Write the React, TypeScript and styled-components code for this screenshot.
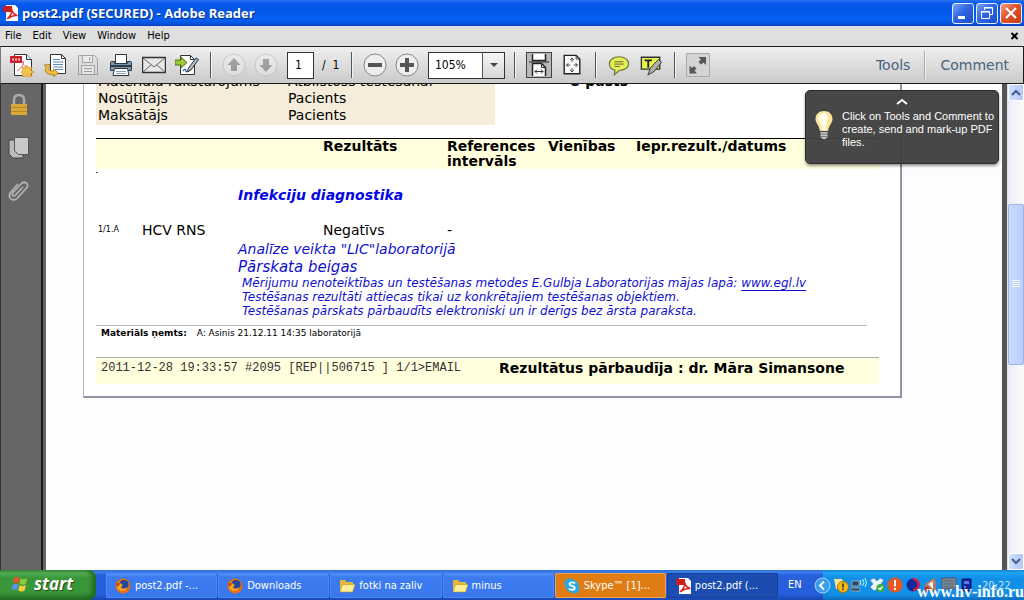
import React from "react";
import styled, { createGlobalStyle } from "styled-components";

const ui = `"DejaVu Sans Condensed", "Noto Sans", sans-serif`;
const doc = `"DejaVu Sans", Verdana, sans-serif`;

const Global = createGlobalStyle`
  * { box-sizing: border-box; }
  body { margin: 0; background: #fff; font-family: ${ui}; font-size: 11px; color: #000; }
  button, input { font: inherit; color: inherit; }
  button { border: 0; padding: 0; background: none; }
`;

const Window = styled.div`
  display: flex;
  flex-direction: column;
  height: 100vh;
  min-height: 420px;
  overflow: hidden;
`;

/* ---------- title and menu ---------- */
const TitleBar = styled.header`
  display: flex;
  align-items: center;
  gap: 4px;
  height: 26px;
  flex: none;
  padding: 0 2px 0 3px;
  background: linear-gradient(#2a72e8 0, #0a5bf0 3px, #0355e4 8px, #0560f4 20px, #0550d8 24px, #0340b8 26px);
  svg { flex: none; }
`;
const Title = styled.h1`
  flex: 1;
  margin: 0;
  font: bold 13px/26px "Open Sans", sans-serif;
  color: #fff;
  text-shadow: 1px 1px 1px #0a2f88;
  white-space: nowrap;
`;
const WindowButtons = styled.div`
  display: flex;
  gap: 2px;
`;
const WindowButton = styled.button<{ $close?: boolean }>`
  display: grid;
  place-items: center;
  width: 22px;
  height: 21px;
  border: 1px solid #e6eefc;
  border-radius: 3px;
  background: ${(p) => (p.$close
    ? "linear-gradient(135deg, #f0a080, #e0532a 45%, #c43c10)"
    : "linear-gradient(135deg, #7ba4f4, #2f66e2 45%, #1c4cc8)")};
`;
const MenuBar = styled.nav`
  display: flex;
  align-items: center;
  gap: 11px;
  height: 20px;
  flex: none;
  padding: 0 5px;
  background: #dfdfdf;
`;
const MenuItem = styled.button`
  line-height: 18px;
`;
const CloseDoc = styled.button`
  margin-left: auto;
  display: flex;
`;

/* ---------- toolbar ---------- */
const Toolbar = styled.div`
  display: flex;
  align-items: center;
  height: 38px;
  flex: none;
  padding: 0 7px 0 4px;
  border: 1px solid #1c1c1c;
  border-left-color: #777;
  background: linear-gradient(#efefef, #d9d9d9 60%, #cacaca);
`;
const Tool = styled.button<{ $w?: number; $dim?: boolean }>`
  display: grid;
  place-items: center;
  flex: none;
  width: ${(p) => p.$w ?? 33}px;
  height: 28px;
  opacity: ${(p) => (p.$dim ? 0.45 : 1)};
`;
const Pressed = styled.span`
  display: grid;
  place-items: center;
  width: 26px;
  height: 26px;
  border: 1px solid #444;
  background: #b9b9b9;
`;
const Separator = styled.span`
  flex: none;
  width: 1px;
  height: 26px;
  margin: 0 7px;
  background: #555;
  box-shadow: 1px 0 #f4f4f4;
`;
const PageInput = styled.input`
  width: 27px;
  height: 27px;
  margin: 0 8px 0 5px;
  padding: 0 0 0 7px;
  border: 1px solid #333;
  background: #fff;
  font-size: 12px;
`;
const PageCount = styled.span`
  width: 22px;
  font-size: 12px;
  white-space: pre;
`;
const Combo = styled.div`
  display: flex;
  flex: none;
  width: 77px;
  height: 27px;
  margin: 0 2px 0 5px;
  border: 1px solid #333;
  background: #fff;
`;
const ComboInput = styled.input`
  flex: 1;
  min-width: 0;
  border: 0;
  padding: 0 6px;
  background: none;
  font-size: 12px;
`;
const ComboArrow = styled.button`
  display: grid;
  place-items: center;
  width: 22px;
  border-left: 1px solid #555;
  background: linear-gradient(#f6f6f6, #d8d8d8);
`;
const PaneTabs = styled.div`
  display: flex;
  align-items: center;
  margin-left: auto;
`;
const PaneTab = styled.button`
  padding: 0 7px;
  font: 14px/26px ${doc};
  color: #48637e;
`;
const PaneDivider = styled.span`
  width: 2px;
  height: 28px;
  margin: 0 7px;
  border-left: 1px solid #aaa;
  border-right: 1px solid #f2f2f2;
`;

/* ---------- workspace ---------- */
const Workspace = styled.div`
  display: flex;
  flex: 1;
  min-height: 0;
`;
const SideBar = styled.aside`
  display: flex;
  flex-direction: column;
  align-items: center;
  gap: 18px;
  flex: none;
  width: 46px;
  padding: 8px 9px 0 0;
  border-left: 1px solid #333;
  background: linear-gradient(90deg, #666 40px, #1a1a1a 40px, #1a1a1a 42px, #666 42px);
`;
const SideButton = styled.button`
  display: grid;
  place-items: center;
  width: 26px;
  height: 25px;
`;
const Viewport = styled.main`
  position: relative;
  flex: 1;
  min-width: 0;
  overflow: hidden;
  background: #fdfdfd;
`;
const Sheet = styled.article`
  margin: -11px 100px 0 37px;
  padding: 0 21px 12px 12px;
  border: 1px solid #8f93a6;
  border-left-color: #bbb;
  border-width: 0 2px 2px 1px;
  background: #fff;
  font-family: ${doc};
  font-size: 14px;
`;
const Details = styled.dl`
  display: grid;
  grid-template-columns: 190px 282px 1fr;
  margin: 0;
  line-height: 17px;
  white-space: nowrap;
  padding: 0 0 1px 2px;
  background: linear-gradient(#f5ecda, #f5ecda) 0 0 / 399px 100% no-repeat;
  dt, dd { margin: 0; }
`;
const Mail = styled.dt`
  font-weight: bold;
`;
const Results = styled.table`
  width: 100%;
  margin-top: 13px;
  table-layout: fixed;
  border-collapse: collapse;
  td, th { padding: 0; text-align: left; vertical-align: top; white-space: nowrap; }
  thead { background: #ffffde; border-top: 1px solid #000; }
  th { line-height: 15px; height: 30px; }
  td { height: 18px; line-height: 18px; }
`;
const Mark = styled.span`
  display: block;
  width: 2px;
  height: 1px;
  margin: 3px 0 0 0;
  background: #555;
`;
const Group = styled.td`
  && {
    height: 52px;
    padding-left: 96px;
    line-height: 52px;
    font-weight: bold;
    font-style: italic;
    color: #0404e4;
  }
`;
const Code = styled.td`
  && {
    padding-left: 2px;
    font-size: 8px;
  }
`;
const Notes = styled.section`
  padding: 1px 0 7px 142px;
  color: #1010cc;
  font-style: italic;
  white-space: nowrap;
  p { margin: 0; line-height: 18px; }
`;
const Closing = styled.p`
  font-size: 15px;
`;
const Fine = styled.ul`
  margin: 0;
  padding: 0 0 0 4px;
  list-style: none;
  font-size: 12px;
  line-height: 14px;
  a { color: inherit; text-underline-offset: 3px; }
`;
const Material = styled.p`
  margin: 0 12px 0 0;
  padding: 0 0 0 5px;
  height: 32px;
  border-top: 1px solid #bbb;
  font-size: 9px;
  line-height: 14px;
  b { margin-right: 7px; }
`;
const SignOff = styled.footer`
  display: grid;
  grid-template-columns: 398px 1fr;
  height: 27px;
  padding-left: 5px;
  border-top: 1px solid #aaa;
  background: #ffffde;
  line-height: 20px;
  white-space: nowrap;
  code { font: 12px/20px "Liberation Mono", monospace; color: #333; }
`;
const Hint = styled.div`
  position: absolute;
  top: 6px;
  right: 3px;
  width: 194px;
  display: grid;
  grid-template-columns: 36px 1fr;
  justify-items: center;
  padding: 7px 0 14px 0;
  border: 1px solid #2c2c2c;
  border-radius: 5px;
  background: rgba(64, 64, 64, 0.96);
  box-shadow: 0 2px 3px rgba(0, 0, 0, 0.4);
  color: #fff;
  font-family: "Liberation Sans", Arial, sans-serif;
  line-height: 13px;
  white-space: nowrap;
  p { margin: 0; justify-self: start; }
`;
const HintCaret = styled.button`
  display: flex;
  grid-column: 1 / -1;
  height: 12px;
`;

const Rail = styled.div`
  display: flex;
  flex-direction: column;
  flex: none;
  width: 22px;
  padding-left: 6px;
  background: linear-gradient(90deg, #555 5px, #ddd 5px, #eef0f8 7px, #fafafa 20px);
`;
const RailButton = styled.button`
  display: grid;
  place-items: center;
  height: 17px;
  flex: none;
  border: 1px solid #fff;
  border-radius: 2px;
  background: linear-gradient(90deg, #d2defc, #b4c8f6);
`;
const RailGap = styled.span<{ $grow: number }>`
  flex: ${(p) => p.$grow} 0 0;
`;
const Thumb = styled.span`
  display: grid;
  place-items: center;
  flex: 160 0 0;
  border: 1px solid #9cb4ec;
  border-radius: 2px;
  background: linear-gradient(90deg, #cbd9fd, #bccefa);
`;

/* ---------- taskbar ---------- */
const Taskbar = styled.footer`
  position: relative;
  display: flex;
  height: 30px;
  flex: none;
  background: linear-gradient(#3168c8 0, #3c82f0 2px, #2860dc 5px, #245edb 24px, #1a48b4 30px);
  color: #fff;
`;
const Start = styled.button`
  display: flex;
  align-items: center;
  gap: 6px;
  flex: none;
  width: 96px;
  margin-right: 10px;
  padding: 0 0 2px 11px;
  border-radius: 0 8px 8px 0;
  background: linear-gradient(#4a9a4a 0, #58b058 3px, #3a963a 8px, #3a963a 22px, #256c25 30px);
  box-shadow: inset -4px 0 5px #1f6a1f;
  font: italic bold 17px/28px "Open Sans", sans-serif;
  text-shadow: 1px 1px 1px #234d12;
`;
const Tasks = styled.div`
  display: flex;
  flex: 0 1 672px;
  gap: 1px;
  padding: 3px 0 2px;
`;
const Task = styled.button<{ $tone?: "alert" | "active" }>`
  display: flex;
  align-items: center;
  gap: 4px;
  flex: 1 1 0;
  min-width: 0;
  padding-left: 9px;
  border-radius: 2px;
  white-space: nowrap;
  background: ${(p) =>
    p.$tone === "alert" ? "#e07c14" : p.$tone === "active" ? "#1c4cb0" : "linear-gradient(#5a98fa, #3c7cf0 4px, #3876ec)"};
  box-shadow: inset 0 0 0 1px ${(p) => (p.$tone === "alert" ? "#f0a050" : p.$tone === "active" ? "#183f98" : "#4c88f4")};
`;
const Language = styled.span`
  margin: 0 auto 0 10px;
  line-height: 30px;
`;
const Tray = styled.div`
  display: flex;
  align-items: center;
  gap: 2px;
  flex: none;
  width: 201px;
  background: linear-gradient(#1288d4 0, #1fa4f4 3px, #1290e8 8px, #1290e8 24px, #0c6cc0 30px);
  svg { flex: none; }
`;
const Expand = styled.button`
  display: flex;
  margin-left: -9px;
`;
const Clock = styled.time`
  margin-left: 5px;
  color: #c4e2fa;
`;
const Watermark = styled.span`
  position: absolute;
  right: 0;
  bottom: 0;
  font: bold 16px/16px "Liberation Serif", serif;
`;

const PdfIcon = () => (
  <svg width="15" height="16" viewBox="0 0 15 16">
    <path d="M3 0h9l3 3v13H3z" fill="#fff" />
    <path d="M0 1h9v6H0z" fill="#c81e1e" />
    <path d="M4 14c3-2 5-6 4.500-10c1 5 3 6 6 6.500c-4-.500-7 1-10.500 3.500" fill="none" stroke="#d22" strokeWidth="1.500" />
  </svg>
);
const Svg = ({ s = 24, children }: { s?: number; children: React.ReactNode }) => (
  <svg width={s} height={s} viewBox="0 0 24 24" fill="none">{children}</svg>
);
const CreatePdf = () => (
  <Svg>
    <path d="M4.500 1.500h12l5 5v16h-17z" fill="#fff" stroke="#333" />
    <path d="M16.500 1.500v5h5" fill="#def" stroke="#333" />
    <path d="M7 18c5-3 7-7 6-10c0 5 3 7 7 7" stroke="#d66" />
    <path d="M0 3h12v7H0z" fill="#c9202c" />
    <path d="M2 6.500h8" stroke="#f7bcbc" strokeWidth="2" strokeDasharray="2 1" />
    <path d="M17 12l1.700 3 3.300-.700-1 3.200 3 1.500-3 1.700 1 3-3.300-.700-1.700 1-1.700-1-3.300.700 1-3-2-1.700 2-1.500-1-3.200 3.300.700z" fill="#f3c04a" stroke="#c88820" strokeWidth=".6" />
  </Svg>
);
const OpenDoc = () => (
  <Svg>
    <path d="M7.500 1.500h11l4 4v15h-15z" fill="#fff" stroke="#333" />
    <path d="M18.500 1.500v4h4" stroke="#333" />
    <path d="M10 6.500h7M10 9h10M10 11.500h10M10 14h10M12 16.500h8" stroke="#5b87b5" />
    <path d="M1 12l6-.500-.500 2.500c-2 2 0 4.500 4 4V16l5 4-5 3.500v-2C3 22 .500 17.500 3.500 14z" fill="#f2bf3c" stroke="#a87414" strokeWidth=".8" />
  </Svg>
);
const Save = () => (
  <Svg>
    <path d="M2.500 2.500h16l3 3v16h-19z" fill="#ddd" stroke="#555" />
    <path d="M6.500 2.500h10v7h-10zM5.500 12.500h13v9h-13z" fill="#f4f4f4" stroke="#555" />
    <path d="M13.500 4v4M8 15.500h8M8 18.500h8" stroke="#555" />
  </Svg>
);
const Print = () => (
  <Svg>
    <path d="M6.500 1.500h11v9h-11z" fill="#fff" stroke="#333" />
    <path d="M1.500 9.500q0-1 1-1h3v2h13v-2h3q1 0 1 1v8h-21z" fill="#7c98ae" stroke="#2d3b48" />
    <path d="M2 13h20" stroke="#2d3b48" strokeWidth="2" />
    <path d="M5.500 15.500h13l1.500 7H4z" fill="#fff" stroke="#333" />
    <path d="M7 18.500h10M7 20.500h10" stroke="#7fa8c8" />
  </Svg>
);
const Envelope = () => (
  <Svg>
    <path d="M.500 4.500h23v15H.500z" fill="#e8e8e8" stroke="#333" strokeWidth="1.400" />
    <path d="M1 5l11 9L23 5M1 19l8-7M23 19l-8-7" stroke="#666" />
  </Svg>
);
const SignDoc = () => (
  <Svg>
    <path d="M5.500 2.500h10l4 4v15h-14z" fill="#fff" stroke="#333" />
    <path d="M15.500 2.500v4h4" stroke="#333" />
    <path d="M8 18c2-3 3-1 3 0s2 1 3-1" stroke="#3466a8" strokeWidth="1.400" />
    <path d="M0 7h6V4l6 5.500L6 15v-3H0z" fill="#9cc83c" stroke="#4c7418" />
    <path d="M23.500 6.500L21 5l-7.500 10-1 4 3.500-2z" fill="#a8bccf" stroke="#333" />
  </Svg>
);
const Round = ({ d, edge = "#888" }: { d: string; edge?: string }) => (
  <Svg>
    <circle cx="12" cy="12" r="11" fill="#eee" stroke={edge} />
    <path d={d} fill="#555" />
  </Svg>
);
const ScrollMode = () => (
  <svg width="20" height="22" viewBox="0 0 20 22" fill="none">
    <path d="M3.500 0v6.500h13V0" fill="#fff" stroke="#222" strokeWidth="1.500" />
    <path d="M3.500 22V9.500h9l4 4V22" fill="#fff" stroke="#222" strokeWidth="1.500" />
    <path d="M12.500 9.500v4h4M6 17.500h8M8 15.500l-2 2 2 2M12 15.500l2 2-2 2" stroke="#333" />
    <path d="M0 8h20" stroke="#222" />
  </svg>
);
const FitPage = () => (
  <Svg s={22}>
    <path d="M3.500 1.500h13l4 4v16h-17z" fill="#f8f8f8" stroke="#222" strokeWidth="1.500" />
    <path d="M16.500 1.500v4h4M12 4.500v4M12 15.500v4M6 12h4M14 12h4M10 6.500l2-2 2 2M10 17.500l2 2 2-2M8 10l-2 2 2 2M16 10l2 2-2 2" stroke="#333" />
  </Svg>
);
const Bubble = () => (
  <Svg s={22}>
    <path d="M12 3c6 0 10.500 3 10.500 7.500S18 18 12 18L7 22.500l.5-5C4 16.500 1.500 14 1.500 10.500 1.500 6 6 3 12 3z" fill="#e4ee5a" stroke="#6d7430" strokeWidth="1.300" />
    <path d="M7 8.500h10M7 11h10M7 13.500h6" stroke="#5d6420" />
  </Svg>
);
const Highlight = () => (
  <Svg s={22}>
    <path d="M1.500 3.500h20v13h-20z" fill="#eaf250" stroke="#333" strokeWidth="1.500" />
    <path d="M5 7h8M9 7v8" stroke="#222" strokeWidth="2" />
    <path d="M23.500 9L20 6l-8.500 9-3 8 7-4z" fill="#b0b0a4" stroke="#333" />
  </Svg>
);
const Resize = () => (
  <Svg>
    <path d="M.500.500h23v23H.500z" fill="#d4d4d4" stroke="#aaa" />
    <path d="M20 4v8l-2.500-2.500-2.500 2-2.500-2.500 2.500-2.500L12.500 4zM3.500 20.500v-8l2.500 2.500 2-2 2.500 2.500-2 2 2.500 3z" fill="#555" />
  </Svg>
);
const Firefox = () => (
  <svg width="16" height="16" viewBox="0 0 16 16">
    <circle cx="8" cy="8" r="7.500" fill="#e66a14" />
    <circle cx="9" cy="6.500" r="4.600" fill="#24479c" />
    <path d="M1 5c2-1 4-1 5 1l2 1-2 2c1 2 4 2 6 0 0 4-6 6-9 2z" fill="#f7a624" />
    <path d="M2 2.500C2 5 3 5 5 5L4 8 1 8z" fill="#c8480c" />
  </svg>
);
const Folder = () => (
  <svg width="16" height="14" viewBox="0 0 16 14">
    <path d="M1 2q0-1 1-1h4l1.500 2H13q1 0 1 1v8H1z" fill="#e8b838" />
    <path d="M3.500 5.500H16L13.500 13H1z" fill="#fdee98" stroke="#c89820" strokeWidth=".6" />
  </svg>
);
const Skype = () => (
  <svg width="16" height="16" viewBox="0 0 16 16" fill="none">
    <circle cx="5.500" cy="5.500" r="5" fill="#28a8ea" />
    <circle cx="10.500" cy="10.500" r="5" fill="#28a8ea" />
    <circle cx="8" cy="8" r="6.500" fill="#28a8ea" />
    <path d="M11 5.500C10 4 5.500 4 5.500 6.200 5.500 8.500 10.800 7.300 10.800 10 10.800 12.300 6 12.300 5 10.300" stroke="#fff" strokeWidth="1.800" />
  </svg>
);
const Flag = () => (
  <svg width="17" height="16" viewBox="0 0 17 16">
    <path d="M3 2c2-1.500 4-1 5.500 0L7.500 7.500C6 6.500 4 6.500 2 7.500z" fill="#e8552c" />
    <path d="M9.500 2.500c2 1 4 1 6.500-.500L15 7.500c-2 1.500-4.500 1.500-6.500.500z" fill="#8ccc3c" />
    <path d="M1.700 8.700c2-1.500 4-1 5.600 0L6.300 14c-2-1-4-1-5.800 0z" fill="#5a94ec" />
    <path d="M8.300 9.200c2 1 4 1 6.500-.500l-1 5.500c-2 1.500-4.500 1.500-6.500.500z" fill="#f8cc38" />
  </svg>
);
const Chevron = ({ down }: { down?: boolean }) => (
  <svg width="10" height="7" viewBox="0 0 10 7" fill="none">
    <path d={down ? "M1 1l4 4 4-4" : "M1 6l4-4 4 4"} stroke="#43608f" strokeWidth="2.200" />
  </svg>
);
const TrayIcons = () => (
  <>
    <svg width="16" height="16" viewBox="0 0 16 16">
      <path d="M1 2h8l2 4v6H3z" fill="#f4e28c" />
      <circle cx="10" cy="10" r="5.500" fill="#f4b81c" stroke="#a87400" />
      <path d="M9.200 6.500h1.600v4H9.200zM9.200 11.500h1.600V13H9.200z" fill="#332" />
    </svg>
    <svg width="16" height="16" viewBox="0 0 16 16" fill="none">
      <path d="M1 4h7v5H1zM0 11h9v3H0z" fill="#345" stroke="#8ab" />
      <path d="M9 3q2 2 0 5M11.500 2q3 3.500 0 7M14 1q3 4.500 0 9" stroke="#bff" />
    </svg>
    <svg width="16" height="16" viewBox="0 0 16 16">
      <path d="M1 3l4-2 3 3 3-3 4 2-3 4 3 3-4 4-3-2-3 2-4-4 3-3z" fill="#e8f4fc" stroke="#4888b8" strokeWidth=".7" />
      <circle cx="11.500" cy="11" r="4" fill="#3cac3c" />
      <path d="M9.500 11l1.500 1.500 2.500-3" fill="none" stroke="#fff" strokeWidth="1.300" />
    </svg>
    <svg width="16" height="16" viewBox="0 0 16 16">
      <circle cx="8" cy="8" r="7.500" fill="#e85820" />
      <path d="M7 3h2v6.500H7zM7 11h2v2H7z" fill="#fff" />
    </svg>
    <svg width="16" height="16" viewBox="0 0 16 16" fill="none">
      <circle cx="8" cy="8" r="6.500" fill="#16269c" />
      <path d="M8 2a5 5 0 0 1 0 11" stroke="#d81c3c" strokeWidth="2.500" />
    </svg>
    <svg width="16" height="16" viewBox="0 0 16 16">
      <path d="M2 7l9-6 2 3v8l-4 3-7-5z" fill="#b87860" />
      <path d="M5 7l5-3v8z" fill="#eee" />
      <circle cx="4" cy="12" r="2.500" fill="#c03020" />
    </svg>
    <svg width="16" height="16" viewBox="0 0 16 16">
      <path d="M1 1h14v11H1z" fill="#7c8890" stroke="#556" />
      <path d="M3 4h10M3 7h10M3 10h10" stroke="#567" />
    </svg>
    <svg width="16" height="16" viewBox="0 0 16 16">
      <path d="M3 2h9v12H3z" fill="#14289c" stroke="#081464" />
      <path d="M5 4h5v3H5zM5 9h2v2H5z" fill="#5878e8" />
    </svg>
  </>
);

export default function App() {
  return (
    <Window>
      <Global />
      <TitleBar>
        <PdfIcon />
        <Title>post2.pdf (SECURED) - Adobe Reader</Title>
        <WindowButtons>
          <WindowButton aria-label="Minimize">
            <svg width="14" height="14"><path d="M2 10h7v3H2z" fill="#fff" /></svg>
          </WindowButton>
          <WindowButton aria-label="Restore">
            <svg width="14" height="14" fill="none" stroke="#fff">
              <path d="M4.500 4V1.500h8v7H10M4 2h9" /><path d="M1.500 5.500h8v7h-8zM1 6h9" />
            </svg>
          </WindowButton>
          <WindowButton $close aria-label="Close">
            <svg width="14" height="14"><path d="M2 2l10 10M12 2L2 12" stroke="#fff" strokeWidth="2.200" /></svg>
          </WindowButton>
        </WindowButtons>
      </TitleBar>

      <MenuBar>
        {["File", "Edit", "View", "Window", "Help"].map((m) => <MenuItem key={m}>{m}</MenuItem>)}
        <CloseDoc aria-label="Close document">
          <svg width="9" height="8"><path d="M1.500 1l6 6M7.500 1l-6 6" stroke="#000" strokeWidth="2" /></svg>
        </CloseDoc>
      </MenuBar>

      <Toolbar>
        <Tool aria-label="Create PDF"><CreatePdf /></Tool>
        <Tool aria-label="Open"><OpenDoc /></Tool>
        <Tool aria-label="Save" $dim><Save /></Tool>
        <Tool aria-label="Print"><Print /></Tool>
        <Tool aria-label="Email"><Envelope /></Tool>
        <Tool aria-label="Sign"><SignDoc /></Tool>
        <Separator />
        <Tool $w={32} $dim aria-label="Previous page"><Round edge="#aaa" d="M12 5l6.500 7H15v6H9v-6H5.500z" /></Tool>
        <Tool $w={32} $dim aria-label="Next page"><Round edge="#aaa" d="M12 19l6.500-7H15V6H9v6H5.500z" /></Tool>
        <PageInput aria-label="Page" defaultValue="1" />
        <PageCount>{"/  1"}</PageCount>
        <Separator />
        <Tool $w={32} aria-label="Zoom out"><Round d="M5 10h14v4H5z" /></Tool>
        <Tool $w={32} aria-label="Zoom in"><Round d="M10 5h4v5h5v4h-5v5h-4v-5H5v-4h5z" /></Tool>
        <Combo>
          <ComboInput aria-label="Zoom" defaultValue="105%" />
          <ComboArrow aria-label="Zoom levels">
            <svg width="8" height="4"><path d="M0 0h8L4 4z" fill="#444" /></svg>
          </ComboArrow>
        </Combo>
        <Separator />
        <Tool aria-label="Scrolling mode"><Pressed><ScrollMode /></Pressed></Tool>
        <Tool aria-label="Fit page"><FitPage /></Tool>
        <Separator />
        <Tool $w={32} aria-label="Sticky note"><Bubble /></Tool>
        <Tool $w={32} aria-label="Highlight text"><Highlight /></Tool>
        <Separator />
        <Tool $w={32} aria-label="Read mode"><Resize /></Tool>
        <PaneTabs>
          <PaneTab>Tools</PaneTab>
          <PaneDivider />
          <PaneTab>Comment</PaneTab>
        </PaneTabs>
      </Toolbar>

      <Workspace>
        <SideBar>
          <SideButton aria-label="Security">
            <svg width="20" height="24" viewBox="0 0 20 24" fill="none">
              <path d="M5 12V7q0-5 5-5t5 5v5" stroke="#aaa" strokeWidth="2.500" />
              <path d="M2 11h16v11H2z" fill="#d9a83c" />
              <path d="M2 14.500h16M2 18.500h16" stroke="#b98820" />
            </svg>
          </SideButton>
          <SideButton aria-label="Page thumbnails">
            <svg width="22" height="24" viewBox="0 0 22 24">
              <path d="M1 4h14v18H5l-4-4z" fill="#bbb" stroke="#444" />
              <path d="M6.500 1.500h14v17h-10l-4-3.500z" fill="#c8c8c8" stroke="#555" />
            </svg>
          </SideButton>
          <SideButton aria-label="Attachments">
            <svg width="24" height="24" viewBox="0 0 24 24" fill="none">
              <path d="M16 8l-7.500 8c-2 2-4.500 0-2.500-2.500L14.500 4.500c3.500-3 8 .5 5 4.500L10.500 19c-4.500 4.500-10.500-.500-7-5.500L11 5" stroke="#b4b4b4" strokeWidth="1.700" />
            </svg>
          </SideButton>
        </SideBar>

        <Viewport>
          <Sheet>
            <Details>
              <dt>Materiāla raksturojums</dt><dd>Atbilstošs testēšanai</dd><Mail>e-pasts</Mail>
              <dt>Nosūtītājs</dt><dd>Pacients</dd><dd />
              <dt>Maksātājs</dt><dd>Pacients</dd><dd />
            </Details>
            <Results>
              <colgroup>
                <col style={{ width: 46 }} /><col style={{ width: 181 }} /><col style={{ width: 124 }} />
                <col style={{ width: 101 }} /><col style={{ width: 88 }} /><col />
              </colgroup>
              <thead>
                <tr>
                  <th /><th /><th>Rezultāts</th><th>References<br />intervāls</th><th>Vienības</th><th>Iepr.rezult./datums</th>
                </tr>
              </thead>
              <tbody>
                <tr><td><Mark /></td><Group colSpan={5}>Infekciju diagnostika</Group></tr>
                <tr><Code>1/1.A</Code><td>HCV RNS</td><td>Negatīvs</td><td>-</td><td /><td /></tr>
              </tbody>
            </Results>
            <Notes>
              <p>Analīze veikta "LIC"laboratorijā</p>
              <Closing>Pārskata beigas</Closing>
              <Fine>
                <li>Mērijumu nenoteiktības un testēšanas metodes E.Gulbja Laboratorijas mājas lapā: <a href="#egl">www.egl.lv</a></li>
                <li>Testēšanas rezultāti attiecas tikai uz konkrētajiem testēšanas objektiem.</li>
                <li>Testēšanas pārskats pārbaudīts elektroniski un ir derīgs bez ārsta paraksta.</li>
              </Fine>
            </Notes>
            <Material><b>Materiāls ņemts:</b> A: Asinis 21.12.11 14:35 laboratorijā</Material>
            <SignOff>
              <code>2011-12-28 19:33:57 #2095 [REP||506715 ] 1/1&gt;EMAIL</code>
              <strong>Rezultātus pārbaudīja : dr. Māra Simansone</strong>
            </SignOff>
          </Sheet>
          <Hint>
            <HintCaret aria-label="Collapse hint">
              <svg width="12" height="7" fill="none"><path d="M1 6l5-4 5 4" stroke="#fff" strokeWidth="2" /></svg>
            </HintCaret>
            <svg width="20" height="30" viewBox="0 0 20 30">
              <path d="M10 1c5 0 8.500 3.500 8.500 8 0 4-3.500 6-4.500 12H6C5 15 1.500 13 1.500 9 1.500 4.500 5 1 10 1z" fill="#fbe49a" />
              <path d="M8 3c3-1 7 1 6 6-1 3-2 6-2.500 11H8C8 14 4 12 4 8c0-2 2-4 4-5z" fill="#fffbe6" />
              <path d="M6.500 22h7v5l-2 2h-3l-2-2z" fill="#c4c4c4" /><path d="M6 24h8M6 26.500h7" stroke="#777" />
            </svg>
            <p>Click on Tools and Comment to<br />create, send and mark-up PDF<br />files.</p>
          </Hint>
        </Viewport>

        <Rail>
          <RailButton aria-label="Scroll up"><Chevron /></RailButton>
          <RailGap $grow={103} />
          <Thumb>
            <svg width="8" height="8"><path d="M0 .5h8M0 2.500h8M0 4.500h8M0 6.500h8" stroke="#eef4fe" /></svg>
          </Thumb>
          <RailGap $grow={189} />
          <RailButton aria-label="Scroll down"><Chevron down /></RailButton>
        </Rail>
      </Workspace>

      <Taskbar>
        <Start><Flag />start</Start>
        <Tasks>
          <Task><Firefox />post2.pdf -...</Task>
          <Task><Firefox />Downloads</Task>
          <Task><Folder />fotki na zaliv</Task>
          <Task><Folder />minus</Task>
          <Task $tone="alert"><Skype />Skype™ [1]...</Task>
          <Task $tone="active"><PdfIcon />post2.pdf (...</Task>
        </Tasks>
        <Language>EN</Language>
        <Tray>
          <Expand aria-label="Show hidden icons">
            <svg width="17" height="17" viewBox="0 0 17 17" fill="none">
              <circle cx="8.500" cy="8.500" r="7.500" fill="#3c9cec" stroke="#a8d8fc" />
              <path d="M10 4.500l-4 4 4 4" stroke="#fff" strokeWidth="2" />
            </svg>
          </Expand>
          <TrayIcons />
          <Clock>20:22</Clock>
        </Tray>
        <Watermark>www.hv-info.ru</Watermark>
      </Taskbar>
    </Window>
  );
}
